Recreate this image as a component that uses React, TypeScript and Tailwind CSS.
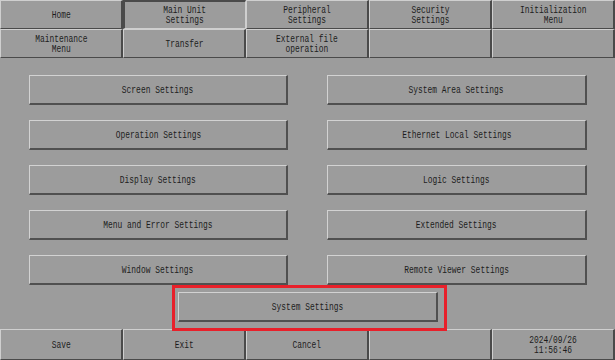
import { clsx as cn } from "clsx"

type Cell = { label: string; active?: boolean }

const topRow: Cell[] = [
  { label: "Home" },
  { label: "Main Unit\nSettings", active: true },
  { label: "Peripheral\nSettings" },
  { label: "Security\nSettings" },
  { label: "Initialization\nMenu" },
]

const secondRow: Cell[] = [
  { label: "Maintenance\nMenu" },
  { label: "Transfer" },
  { label: "External file\noperation" },
  { label: "" },
  { label: "" },
]

const bottomRow: Cell[] = [
  { label: "Save" },
  { label: "Exit" },
  { label: "Cancel" },
  { label: "" },
  { label: "2024/09/26\n11:56:46" },
]

const leftButtons = [
  "Screen Settings",
  "Operation Settings",
  "Display Settings",
  "Menu and Error Settings",
  "Window Settings",
]

const rightButtons = [
  "System Area Settings",
  "Ethernet Local Settings",
  "Logic Settings",
  "Extended Settings",
  "Remote Viewer Settings",
]

// bitmap-ish panel font: narrow mono glyphs
function Label({ text }: { text: string }) {
  return (
    <span className="inline-block scale-x-[0.72] whitespace-pre-line text-center leading-[10px] text-[11px] text-[#1c1c1c]">
      {text}
    </span>
  )
}

function BarCell({ cell, h }: { cell: Cell; h: string }) {
  return (
    <div
      className={cn(
        "flex items-center justify-center overflow-hidden",
        h,
        cell.active
          ? "border-t-2 border-l-2 border-b border-r border-t-[#4a4a4a] border-l-[#4a4a4a] border-b-[#cfcfcf] border-r-[#cfcfcf]"
          : "border-t border-l border-b border-r-2 border-t-[#cfcfcf] border-l-[#cfcfcf] border-b-[#4a4a4a] border-r-[#4a4a4a]"
      )}
    >
      {cell.label && <Label text={cell.label} />}
    </div>
  )
}

function PanelButton({ label, className }: { label: string; className?: string }) {
  return (
    <div
      className={cn(
        "h-[30px] flex items-center justify-center border-t border-l border-b-2 border-r-2 border-t-[#d2d2d2] border-l-[#d2d2d2] border-b-[#505050] border-r-[#505050]",
        className
      )}
    >
      <Label text={label} />
    </div>
  )
}

export default function App() {
  return (
    <div
      className="w-[615px] h-[360px] bg-[#9c9c9c] flex flex-col overflow-hidden"
      style={{ fontFamily: '"Liberation Mono", "DejaVu Sans Mono", monospace' }}
    >
      {/* tab bar */}
      <div className="grid grid-cols-5">
        {topRow.map((c, i) => (
          <BarCell key={i} cell={c} h="h-[29px]" />
        ))}
        {secondRow.map((c, i) => (
          <BarCell key={i} cell={c} h="h-[29px]" />
        ))}
      </div>

      {/* settings menu */}
      <div className="relative flex-1 flex flex-col pt-[17px]">
        <div className="grid grid-cols-[259px_260px] gap-x-[39px] gap-y-[15px] pl-[29px]">
          {leftButtons.map((l, i) => (
            <div key={l} className="contents">
              <PanelButton label={l} />
              <PanelButton label={rightButtons[i]} />
            </div>
          ))}
        </div>
        <div className="relative mt-[7px] ml-[178px] w-[260px]">
          <PanelButton label="System Settings" />
          <div className="absolute -left-[6px] -top-[7px] w-[275px] h-[46px] border-[3px] border-[#e8202a]" />
        </div>
      </div>

      {/* footer */}
      <div className="grid grid-cols-5">
        {bottomRow.map((c, i) => (
          <BarCell key={i} cell={c} h="h-[31px]" />
        ))}
      </div>
    </div>
  )
}
